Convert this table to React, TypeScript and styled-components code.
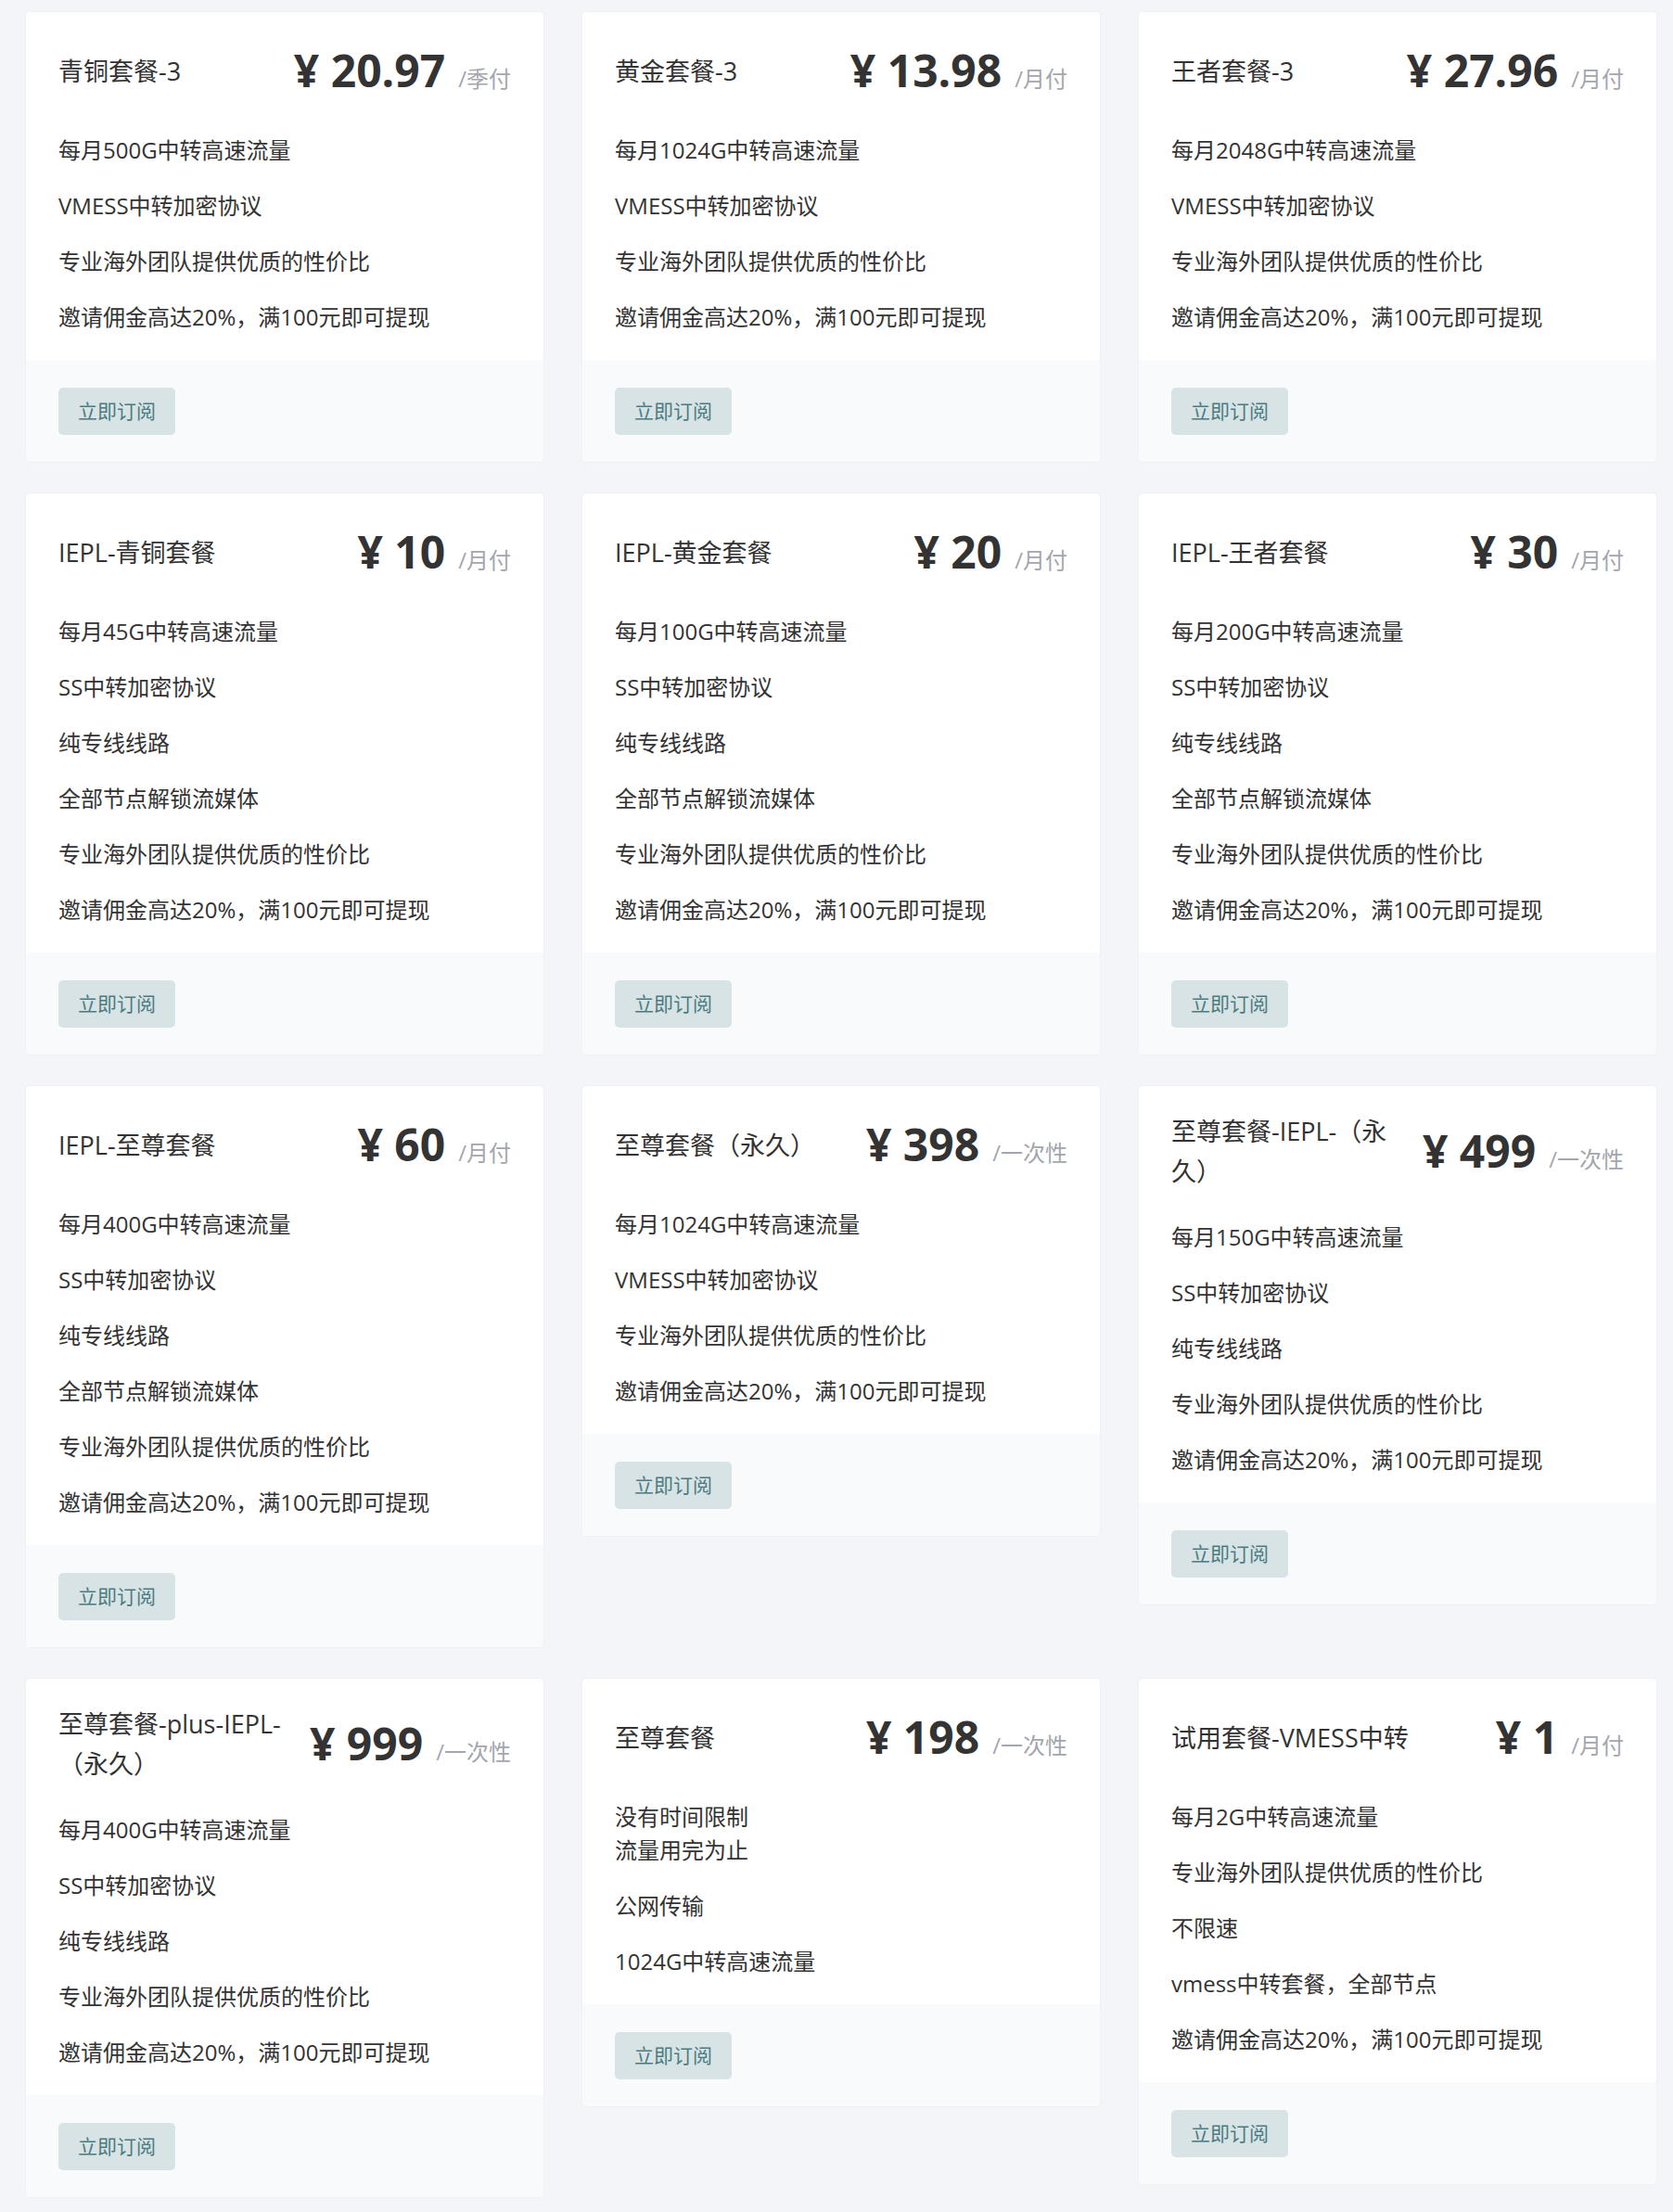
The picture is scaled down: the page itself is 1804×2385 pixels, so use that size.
import React from 'react';
import styled, { createGlobalStyle } from 'styled-components';

type Plan = {
	name: string;
	price: string;
	unit: string;
	features: string[];
};

const invite = '邀请佣金高达20%，满100元即可提现';
const team = '专业海外团队提供优质的性价比';

const plans: Plan[] = [
	{ name: '青铜套餐-3', price: '20.97', unit: '/季付', features: ['每月500G中转高速流量', 'VMESS中转加密协议', team, invite] },
	{ name: '黄金套餐-3', price: '13.98', unit: '/月付', features: ['每月1024G中转高速流量', 'VMESS中转加密协议', team, invite] },
	{ name: '王者套餐-3', price: '27.96', unit: '/月付', features: ['每月2048G中转高速流量', 'VMESS中转加密协议', team, invite] },
	{
		name: 'IEPL-青铜套餐',
		price: '10',
		unit: '/月付',
		features: ['每月45G中转高速流量', 'SS中转加密协议', '纯专线线路', '全部节点解锁流媒体', team, invite],
	},
	{
		name: 'IEPL-黄金套餐',
		price: '20',
		unit: '/月付',
		features: ['每月100G中转高速流量', 'SS中转加密协议', '纯专线线路', '全部节点解锁流媒体', team, invite],
	},
	{
		name: 'IEPL-王者套餐',
		price: '30',
		unit: '/月付',
		features: ['每月200G中转高速流量', 'SS中转加密协议', '纯专线线路', '全部节点解锁流媒体', team, invite],
	},
	{
		name: 'IEPL-至尊套餐',
		price: '60',
		unit: '/月付',
		features: ['每月400G中转高速流量', 'SS中转加密协议', '纯专线线路', '全部节点解锁流媒体', team, invite],
	},
	{ name: '至尊套餐（永久）', price: '398', unit: '/一次性', features: ['每月1024G中转高速流量', 'VMESS中转加密协议', team, invite] },
	{
		name: '至尊套餐-IEPL-（永久）',
		price: '499',
		unit: '/一次性',
		features: ['每月150G中转高速流量', 'SS中转加密协议', '纯专线线路', team, invite],
	},
	{
		name: '至尊套餐-plus-IEPL-（永久）',
		price: '999',
		unit: '/一次性',
		features: ['每月400G中转高速流量', 'SS中转加密协议', '纯专线线路', team, invite],
	},
	{ name: '至尊套餐', price: '198', unit: '/一次性', features: ['没有时间限制\n流量用完为止', '公网传输', '1024G中转高速流量'] },
	{
		name: '试用套餐-VMESS中转',
		price: '1',
		unit: '/月付',
		features: ['每月2G中转高速流量', team, '不限速', 'vmess中转套餐，全部节点', invite],
	},
];

const PlanCard = ({ name, price, unit, features }: Plan) => {
	return (
		<Card>
			<Body>
				<Header>
					<Title>{name}</Title>
					<Price>
						<Amount>¥ {price}</Amount>
						<Unit>{unit}</Unit>
					</Price>
				</Header>
				<Features>
					{features.map((f, i) => (
						<Feature key={i}>{f}</Feature>
					))}
				</Features>
			</Body>
			<Footer>
				<SubscribeButton>立即订阅</SubscribeButton>
			</Footer>
		</Card>
	);
};

export default function App() {
	return (
		<>
			<GlobalStyle />
			<Page>
				<Grid>
					{plans.map(p => (
						<PlanCard key={p.name} {...p} />
					))}
				</Grid>
			</Page>
		</>
	);
}

const GlobalStyle = createGlobalStyle`
	body {
		margin: 0;
		background: #f4f5f9;
		font-family: 'Open Sans', 'Noto Sans CJK SC', sans-serif;
		color: #333;
	}
`;

const Page = styled.div`
	padding: 12px 17px 16px 27px;
`;

const Grid = styled.div`
	display: grid;
	grid-template-columns: repeat(3, 560px);
	column-gap: 40px;
	row-gap: 32px;
	align-items: start;
`;

const Card = styled.div`
	box-sizing: border-box;
	background: #ffffff;
	border: 1px solid #eef0f4;
	border-radius: 5px;
	overflow: hidden;
`;

const Body = styled.div`
	padding: 27px 35px 28px;
`;

const Header = styled.div`
	display: flex;
	align-items: center;
	min-height: 72px;
	margin-bottom: 32px;
`;

const Title = styled.div`
	flex: 1;
	min-width: 0;
	font-size: 27px;
	line-height: 43px;
	color: #333;
`;

const Price = styled.div`
	flex-shrink: 0;
	margin-left: 16px;
	display: flex;
	align-items: baseline;
	height: 72px;
`;

const Amount = styled.span`
	font-size: 48px;
	line-height: 72px;
	font-weight: 700;
	color: #333;
`;

const Unit = styled.span`
	margin-left: 14px;
	font-size: 24px;
	line-height: 1;
	color: #a3a6ad;
`;

const Features = styled.ul`
	list-style: none;
	margin: 0;
	padding: 0;
	display: flex;
	flex-direction: column;
	gap: 24px;
`;

const Feature = styled.li`
	font-size: 24px;
	line-height: 36px;
	color: #333;
	white-space: pre-line;
`;

const Footer = styled.div`
	background: #f9fafc;
	padding: 30px 35px 29px;
`;

const SubscribeButton = styled.button`
	display: inline-block;
	border: none;
	border-radius: 5px;
	background: #d7e3e5;
	color: #4b7b81;
	font-family: 'Open Sans', 'Noto Sans CJK SC', sans-serif;
	font-size: 21px;
	line-height: 31px;
	padding: 10px 21px;
	cursor: pointer;
`;
